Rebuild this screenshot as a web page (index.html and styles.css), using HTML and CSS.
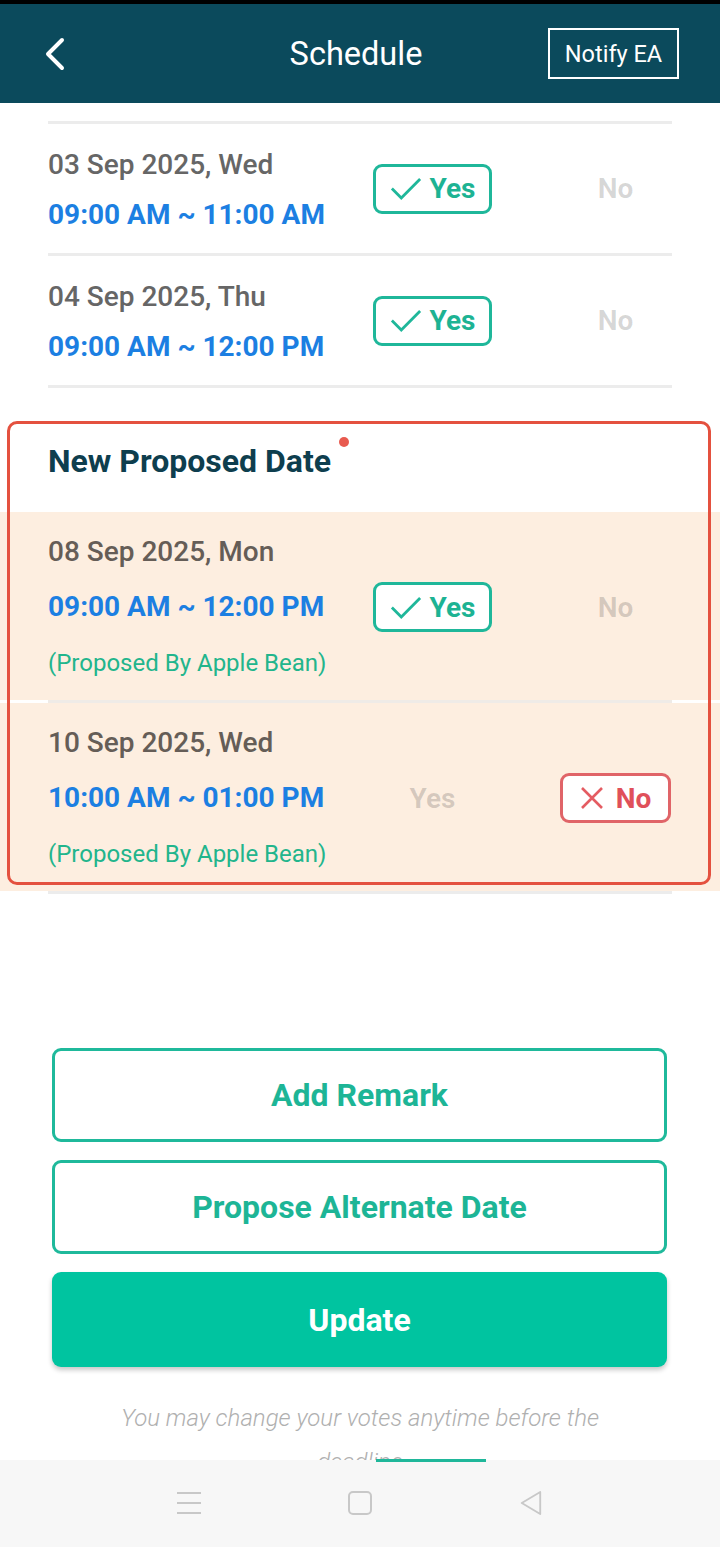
FILE: index.html
```html
<!DOCTYPE html>
<html>
<head>
<meta charset="utf-8">
<link rel="stylesheet" href="styles.css">
</head>
<body>
<div class="screen">
  <div class="main">
    <div class="status"></div>
    <header class="topbar">
      <svg class="back" viewBox="0 0 24 34"><path d="M19 3 L5 17 L19 31" fill="none" stroke="#fff" stroke-width="4" stroke-linecap="round" stroke-linejoin="round"/></svg>
      <h1 class="title">Schedule</h1>
      <div class="notify">Notify EA</div>
    </header>

    <div class="list">
      <div class="divider"></div>
      <div class="row plain">
        <div class="info">
          <div class="date">03 Sep 2025, Wed</div>
          <div class="time">09:00 AM ~ 11:00 AM</div>
        </div>
        <div class="votes">
          <div class="vote yes"><svg class="check" viewBox="0 0 34 24"><path d="M2 12 L12 22 L32 2" fill="none" stroke="#1fb79a" stroke-width="3"/></svg>Yes</div>
          <div class="vote off">No</div>
        </div>
      </div>
      <div class="divider"></div>
      <div class="row plain">
        <div class="info">
          <div class="date">04 Sep 2025, Thu</div>
          <div class="time">09:00 AM ~ 12:00 PM</div>
        </div>
        <div class="votes">
          <div class="vote yes"><svg class="check" viewBox="0 0 34 24"><path d="M2 12 L12 22 L32 2" fill="none" stroke="#1fb79a" stroke-width="3"/></svg>Yes</div>
          <div class="vote off">No</div>
        </div>
      </div>
      <div class="divider"></div>
    </div>

    <section class="proposed">
      <div class="proposed-head">
        <span class="proposed-title">New Proposed Date</span>
        <span class="dot"></span>
      </div>
      <div class="row peach">
        <div class="info">
          <div class="date">08 Sep 2025, Mon</div>
          <div class="time">09:00 AM ~ 12:00 PM</div>
          <div class="by">(Proposed By Apple Bean)</div>
        </div>
        <div class="votes">
          <div class="vote yes"><svg class="check" viewBox="0 0 34 24"><path d="M2 12 L12 22 L32 2" fill="none" stroke="#1fb79a" stroke-width="3"/></svg>Yes</div>
          <div class="vote off">No</div>
        </div>
      </div>
      <div class="sep"><div class="sep-line"></div></div>
      <div class="row peach">
        <div class="info">
          <div class="date">10 Sep 2025, Wed</div>
          <div class="time">10:00 AM ~ 01:00 PM</div>
          <div class="by">(Proposed By Apple Bean)</div>
        </div>
        <div class="votes">
          <div class="vote off">Yes</div>
          <div class="vote no"><svg class="cross" viewBox="0 0 24 24"><path d="M2 2 L22 22 M22 2 L2 22" fill="none" stroke="#e45c62" stroke-width="2.6"/></svg>No</div>
        </div>
      </div>
    </section>
    <div class="divider"></div>

    <div class="actions">
      <div class="btn outline">Add Remark</div>
      <div class="btn outline">Propose Alternate Date</div>
      <div class="btn primary">Update</div>
    </div>
    <p class="hint">You may change your votes anytime before the deadline</p>
  </div>

  <nav class="navbar">
    <div class="indicator"></div>
    <svg class="nav-icon" viewBox="0 0 24 24"><path d="M0 2 H24 M0 12 H24 M0 22 H24" stroke="#c8c8c8" stroke-width="2" fill="none"/></svg>
    <svg class="nav-icon" viewBox="0 0 24 24"><rect x="1" y="1" width="22" height="22" rx="4" stroke="#c8c8c8" stroke-width="2" fill="none"/></svg>
    <svg class="nav-icon" viewBox="0 0 24 26"><path d="M22 1 L2 13 L22 25 Z" stroke="#c8c8c8" stroke-width="2" fill="none" stroke-linejoin="round"/></svg>
  </nav>
</div>
</body>
</html>
```

FILE: styles.css
```css
html, body {
  margin: 0;
  padding: 0;
}
body {
  font-family: Roboto, "Noto Sans", sans-serif;
  background: #fff;
}
.screen {
  width: 720px;
  height: 1547px;
  display: flex;
  flex-direction: column;
  overflow: hidden;
  background: #fff;
}
.main {
  height: 1460px;
  flex: none;
  overflow: hidden;
}
.status {
  height: 4px;
  background: #000;
}
.topbar {
  height: 99px;
  background: #0b4a5c;
  display: grid;
  grid-template-columns: 1fr auto 1fr;
  align-items: center;
  padding: 0 41px 0 43px;
  color: #fff;
}
.back {
  width: 24px;
  height: 34px;
  justify-self: start;
}
.title {
  margin: 0 10px 0 0;
  font-size: 32.5px;
  font-weight: 400;
}
.notify {
  justify-self: end;
  box-sizing: border-box;
  width: 131px;
  height: 51px;
  border: 2px solid #fff;
  display: flex;
  align-items: center;
  justify-content: center;
  font-size: 23.5px;
}
.list {
  padding-top: 18px;
}
.divider {
  margin: 0 48px;
  height: 3px;
  background: #ececec;
}
.row {
  display: flex;
  align-items: center;
  padding: 0 49px 0 48px;
}
.row.plain {
  height: 129px;
}
.row.plain .info {
  padding-top: 3px;
}
.info {
  width: 325px;
  flex: none;
}
.date {
  font-size: 28px;
  font-weight: 500;
  color: #666;
  line-height: 30px;
}
.time {
  font-size: 28px;
  font-weight: 700;
  color: #1c7fe2;
  line-height: 30px;
  margin-top: 20px;
}
.votes {
  display: grid;
  grid-template-columns: 119px 111px;
  column-gap: 68px;
}
.vote {
  box-sizing: border-box;
  height: 50px;
  display: flex;
  align-items: center;
  justify-content: center;
  font-size: 28px;
  font-weight: 700;
}
.vote.off {
  color: rgba(0, 0, 0, 0.16);
}
.vote.yes {
  border: 3px solid #1fb79a;
  border-radius: 9px;
  color: #1db393;
  background: #fff;
  gap: 8px;
}
.vote.no {
  border: 3px solid #e06468;
  border-radius: 9px;
  color: #e0505a;
  background: #fff;
  gap: 12px;
}
.check {
  width: 32px;
  height: 23px;
}
.cross {
  width: 24px;
  height: 24px;
}
.proposed {
  position: relative;
  margin-top: 33px;
}
.proposed::after {
  content: "";
  position: absolute;
  top: 0;
  left: 7px;
  right: 9px;
  bottom: 6px;
  border: 3px solid #e4513f;
  border-radius: 10px;
  pointer-events: none;
}
.proposed-head {
  height: 91px;
  box-sizing: border-box;
  padding: 23px 0 0 48px;
  display: flex;
  align-items: flex-start;
}
.proposed-title {
  font-size: 32px;
  font-weight: 700;
  color: #0e3e4e;
  line-height: 34px;
}
.dot {
  width: 10px;
  height: 10px;
  border-radius: 50%;
  background: #e85a4f;
  margin: -7px 0 0 8px;
}
.row.peach {
  background: #fdeee0;
  padding-top: 25px;
  padding-bottom: 23px;
}
.row.peach .date {
  color: #655d57;
}
.row.peach .time {
  margin-top: 25px;
}
.by {
  font-size: 24px;
  color: #22b58c;
  line-height: 28px;
  margin-top: 27px;
}
.sep {
  background: #fff;
  padding: 0 48px;
}
.sep-line {
  height: 3px;
  background: #efebe7;
}
.actions {
  margin-top: 154px;
  padding: 0 53px 0 52px;
  display: flex;
  flex-direction: column;
  gap: 18px;
}
.btn {
  box-sizing: border-box;
  height: 94px;
  border-radius: 9px;
  font-size: 32px;
  font-weight: 700;
  display: flex;
  align-items: center;
  justify-content: center;
}
.btn.outline {
  border: 3px solid #1fb99b;
  color: #1db596;
  background: #fff;
}
.btn.primary {
  height: 95px;
  background: #00c4a0;
  color: #fff;
  box-shadow: 0 3px 5px rgba(0, 0, 0, 0.22);
}
.hint {
  width: 520px;
  margin: 29px auto 0;
  text-align: center;
  font-size: 24px;
  font-style: italic;
  font-weight: 300;
  color: #b0b0b0;
  line-height: 44px;
}
.navbar {
  position: relative;
  flex: 1;
  background: #f7f7f7;
  display: flex;
  justify-content: center;
  align-items: center;
  gap: 147px;
  padding-bottom: 1px;
}
.indicator {
  position: absolute;
  top: -1px;
  left: 376px;
  width: 110px;
  height: 3px;
  background: #1fb79a;
}
.nav-icon {
  width: 24px;
  height: 24px;
}
```
